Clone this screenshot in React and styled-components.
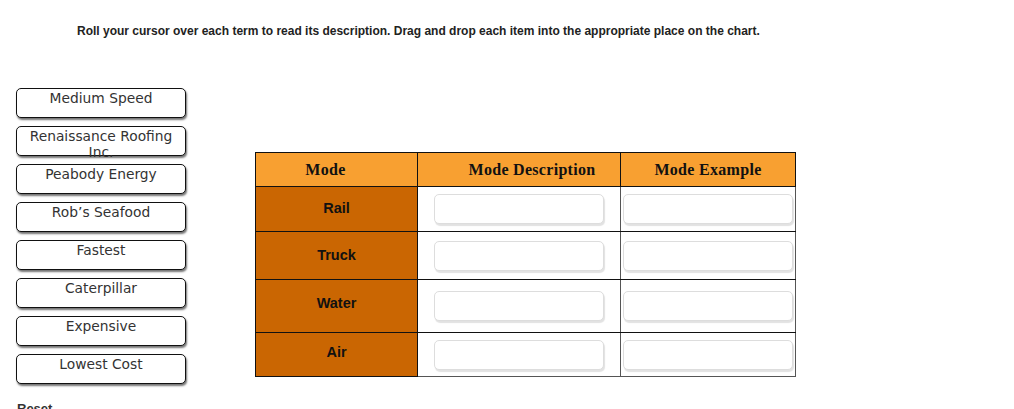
import React from "react";
import styled, { createGlobalStyle } from "styled-components";

const Global = createGlobalStyle`
  html, body { margin: 0; padding: 0; background: #fff; }
  body { font-family: "Liberation Sans", Arial, sans-serif; }
`;

const Page = styled.div`
  width: 1014px;
  height: 409px;
  overflow: hidden;
`;

const Instruction = styled.p`
  margin: 25px 0 0 77px;
  font-family: "Liberation Sans", Arial, sans-serif;
  font-weight: bold;
  font-size: 12px;
  line-height: 13px;
  color: #222;
`;

const Main = styled.div`
  display: flex;
  align-items: flex-start;
  padding-left: 16px;
  margin-top: 50px;
`;

const LeftColumn = styled.div`
  display: flex;
  flex-direction: column;
`;

const TermList = styled.div`
  display: flex;
  flex-direction: column;
  gap: 8px;
  width: 170px;
`;

const Term = styled.div`
  box-sizing: border-box;
  height: 30px;
  border: 1px solid #111;
  border-radius: 5px;
  box-shadow: 1px 2px 2px rgba(0, 0, 0, 0.55);
  background: #fff;
  padding: 1px 4px 0;
  text-align: center;
  font-family: "DejaVu Sans", Verdana, sans-serif;
  font-size: 13.8px;
  line-height: 16px;
  color: #333;
`;

const Reset = styled.div`
  margin: 17px 0 0 1px;
  font-family: "Liberation Sans", Arial, sans-serif;
  font-weight: bold;
  font-size: 13px;
  color: #333;
`;

const Chart = styled.table`
  margin: 64px 0 0 69px;
  border-collapse: collapse;
  table-layout: fixed;
  width: 540px;
`;

const HeadCell = styled.th`
  height: 33px;
  padding: 0 ${(p) => p.$pr || 0}px 0 ${(p) => p.$pl || 0}px;
  background: #f8a031;
  border: 1px solid #111;
  font-family: "Liberation Serif", "Times New Roman", serif;
  font-weight: bold;
  font-size: 16px;
  letter-spacing: 0.3px;
  color: #111;
  text-align: center;
`;

const ModeCell = styled.td`
  height: ${(p) => p.$h - p.$pb}px;
  padding: 0 0 ${(p) => p.$pb}px;
  background: #ca6602;
  border: 1px solid #111;
  text-align: center;
  font-family: "Liberation Sans", Tahoma, sans-serif;
  font-weight: bold;
  font-size: 14.5px;
  color: #111;
`;

const DropCell = styled.td`
  padding: 0;
  border-top: 1px solid #111;
  border-bottom: 1px solid ${(p) => (p.$last ? "#555" : "#111")};
  border-left: 1px solid #555;
  border-right: 1px solid #555;
  background: #fff;
  vertical-align: middle;
`;

const DropBox = styled.div`
  box-sizing: border-box;
  width: 170px;
  height: 30px;
  margin: 0 auto;
  border: 1px solid #ddd;
  border-radius: 5px;
  box-shadow: 1px 2px 1px #e2e2e2;
  background: #fff;
`;

const terms = [
  "Medium Speed",
  "Renaissance Roofing Inc.",
  "Peabody Energy",
  "Rob’s Seafood",
  "Fastest",
  "Caterpillar",
  "Expensive",
  "Lowest Cost",
];

const rows = [
  { mode: "Rail", h: 44, pb: 2 },
  { mode: "Truck", h: 47, pb: 2 },
  { mode: "Water", h: 52, pb: 6 },
  { mode: "Air", h: 43, pb: 6 },
];

export default function App() {
  return (
    <Page>
      <Global />
      <Instruction>
        Roll your cursor over each term to read its description. Drag and drop each item into the
        appropriate place on the chart.
      </Instruction>
      <Main>
        <LeftColumn>
          <TermList>
            {terms.map((t) => (
              <Term key={t}>{t}</Term>
            ))}
          </TermList>
          <Reset>Reset</Reset>
        </LeftColumn>
        <Chart>
          <colgroup>
            <col style={{ width: 162 }} />
            <col style={{ width: 203 }} />
            <col style={{ width: 175 }} />
          </colgroup>
          <thead>
            <tr>
              <HeadCell $pr={22}>Mode</HeadCell>
              <HeadCell $pl={26}>Mode Description</HeadCell>
              <HeadCell>Mode Example</HeadCell>
            </tr>
          </thead>
          <tbody>
            {rows.map((r, i) => (
              <tr key={r.mode}>
                <ModeCell $h={r.h} $pb={r.pb}>
                  {r.mode}
                </ModeCell>
                <DropCell $last={i === rows.length - 1}>
                  <DropBox />
                </DropCell>
                <DropCell $last={i === rows.length - 1}>
                  <DropBox />
                </DropCell>
              </tr>
            ))}
          </tbody>
        </Chart>
      </Main>
    </Page>
  );
}
